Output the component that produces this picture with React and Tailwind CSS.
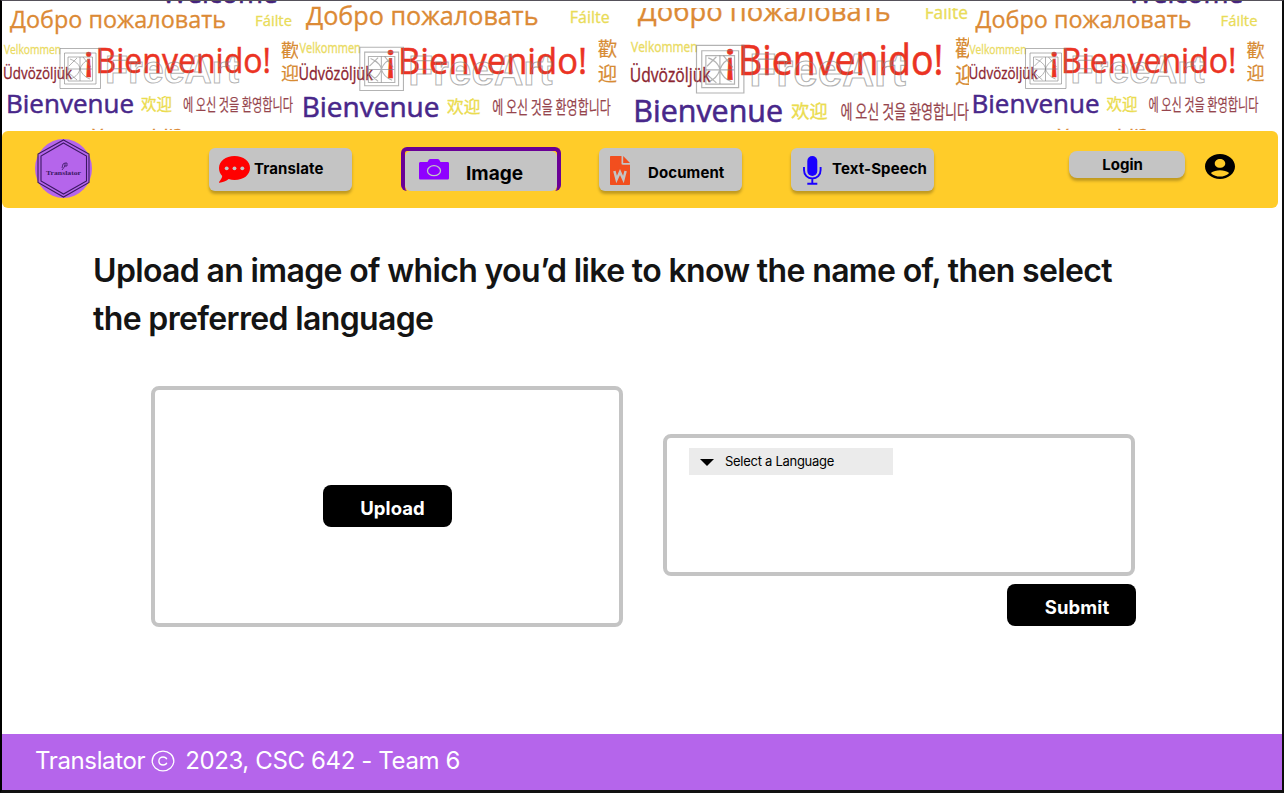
import React from "react";

// One block of greetings, repeated at several sizes across the banner.
function Word({ x, y, w, size, fill, children, cjk, heavy = 0 }) {
  return (
    <text
      x={x}
      y={y}
      textLength={w}
      lengthAdjust="spacingAndGlyphs"
      fontSize={size}
      fill={fill}
      stroke={fill}
      strokeWidth={heavy}
      className={cjk ? "font-['Noto_Sans_CJK_SC',sans-serif]" : "font-['Open_Sans','Noto_Sans',sans-serif]"}
    >
      {children}
    </text>
  );
}

function Greetings({ edge, width, sx, tx, sy, ty, top = 0, bottom = 130 }) {
  return (
    <svg width={width} height="130" viewBox={`${edge} 1 ${width} 130`} className="block shrink-0 overflow-hidden">
      <g transform={`matrix(${sx} 0 0 ${sy} ${tx} ${ty})`}>
        <Word x={162} y={3.3} w={116} size={27} fill="#46247d" heavy={0.6}>Welcome</Word>
        <Word x={10} y={28} w={216} size={23} fill="#dc8a35" heavy={0.3}>Добро пожаловать</Word>
        <Word x={255} y={26} w={37} size={14.5} fill="#e9dc58" heavy={0.3}>Fáilte</Word>
        <Word x={4} y={54} w={57} size={12.5} fill="#eadb62" heavy={0.3}>Velkommen</Word>
        <Word x={3} y={79} w={69} size={16.5} fill="#8c2430" heavy={0.3}>Üdvözöljük</Word>
        <Word x={83.5} y={70.500} w={10.5} size={35} fill="#eb3323" heavy={0.5}>¡</Word>
        <Word x={95.500} y={73} w={175.500} size={34.5} fill="#eb3323" heavy={0.5}>Bienvenido!</Word>
        <Word x={281} y={57} w={18} size={18} fill="#d78b33" cjk heavy={0.2}>歡</Word>
        <Word x={281} y={80} w={18} size={18} fill="#d78b33" cjk heavy={0.2}>迎</Word>
        <Word x={6} y={112.5} w={128} size={25.5} fill="#48278a" heavy={0.5}>Bienvenue</Word>
        <Word x={141} y={109.5} w={31} size={15.5} fill="#ebdc4f" cjk heavy={0.3}>欢迎</Word>
        <Word x={183} y={110.5} w={110} size={16.5} fill="#96454d" cjk heavy={0.2}>에 오신 것을 환영합니다</Word>
        <Word x={92} y={145} w={90} size={21} fill="#dc8a35" heavy={0.3}>Xoş gəldi?</Word>
        <g fill="none" stroke="#808080" strokeOpacity="0.6" strokeWidth="1">
          <path d="M60 48.5h40.500v40H60z M64.500 53h31.500v31H64.500z M68 57h24.500v24H68z" />
          <path d="M80 57v24 M68 69h24 M70 59c8 3 10 8 10 10M70 79c7-2 9-7 10-10M90 59c-6 2-9 7-10 10M90 79c-6-2-9-7-10-10M69 66l8-8M69 73l8 7M83 57l8 10" />
          <text x="105" y="83" textLength="134" lengthAdjust="spacingAndGlyphs" fontSize="39" className="font-['Liberation_Sans',sans-serif] font-bold">FreeArt</text>
        </g>
      </g>
      <path d={`M${edge} 1h${width}V${top}H${edge}z M${edge} ${bottom}h${width}v3h${-width}z`} fill="#fff" />
    </svg>
  );
}

function Logo() {
  return (
    <svg width="57" height="59" viewBox="0 0 57 59" className="ml-[33px] mt-2 shrink-0">
      <ellipse cx="28.500" cy="29.500" rx="28.500" ry="29.500" fill="#b565eb" />
      <g fill="none" stroke="#3b1863" strokeWidth="1.1">
        <path d="M28.500 1 54 15v28.500L28.500 58 3 43.500V15z" />
        <path d="M28.500 4 51.500 17v25L28.500 55 6 42V17z" />
        <path d="m27 29 1-4 2-1v3l-3 4M30 24h2v3h-3" strokeWidth="0.8" />
      </g>
      <text x="11" y="35.500" textLength="35" lengthAdjust="spacingAndGlyphs" fontSize="5.500" fill="#3b1863" className="font-['Liberation_Serif',serif] font-bold">Translator</text>
    </svg>
  );
}

const CommentIcon = () => (
  <svg width="31" height="27" viewBox="0 0 31 27" className="ml-2.5 mt-2 shrink-0">
    <path fill="#f00" d="M15.500 0C24.500 0 31 5 31 12s-6.500 12-15.500 12c-2 0-4-.3-5.800-.9C7 25.300 3.800 26.500.5 26.700c-.6 0-.7-.6-.3-1 1.600-1.800 2.800-3.900 3-5.700C1.200 18 0 15.200 0 12 0 5 6.500 0 15.500 0Z" />
    <g fill="#c4c4c4"><circle cx="7.700" cy="12.300" r="1.900" /><circle cx="15.500" cy="12.300" r="1.900" /><circle cx="23.300" cy="12.300" r="1.900" /></g>
  </svg>
);

const CameraIcon = () => (
  <svg width="30" height="21" viewBox="0 0 30 21" className="ml-[14px] mt-2 shrink-0">
    <path fill="#8f00ff" d="M1.500 3h7l1.300-2.200C10.200.2 10.700 0 11.500 0h7c.8 0 1.400.2 1.700.8L21.500 3h7c1 0 1.500.6 1.500 1.500V19c0 1-.6 1.500-1.500 1.500h-27C.6 20.500 0 20 0 19V4.500C0 3.600.6 3 1.500 3Z" />
    <ellipse cx="15" cy="11.700" rx="6.500" ry="5" fill="none" stroke="#c4c4c4" strokeWidth="1.300" />
  </svg>
);

const WordIcon = () => (
  <svg width="20" height="29" viewBox="0 0 20 29" className="mr-px ml-[11px] mt-2 shrink-0">
    <path fill="#f24e1e" d="M1 0h10.500v7.500c0 .8.500 1.200 1.200 1.200H20V28c0 .6-.5 1-1.200 1H1c-.6 0-1-.4-1-1V1c0-.6.4-1 1-1Z" />
    <path fill="#f24e1e" d="M13.200 0v7H20z" />
    <path d="m4.400 15 2.200 8.500L10 16l3.400 7.500 2.200-8.500" fill="none" stroke="#c4c4c4" strokeWidth="2.500" />
  </svg>
);

const MicIcon = () => (
  <svg width="19" height="29" viewBox="0 0 19 29" className="ml-3 mt-2 shrink-0">
    <rect x="4.300" width="10" height="20" rx="5" fill="#1a00ff" />
    <path d="M1 11v3c0 5 3.500 8.500 8.300 8.500s8.300-3.500 8.300-8.500v-3M9.300 23v4M4.300 27.800h10" fill="none" stroke="#1a00ff" strokeWidth="1.900" />
  </svg>
);

const AccountIcon = () => (
  <svg width="30" height="25" viewBox="2 2 20 20" preserveAspectRatio="none" className="ml-5 mt-[23px] shrink-0">
    <path d="M12 2C6.480 2 2 6.480 2 12s4.480 10 10 10 10-4.480 10-10S17.520 2 12 2zm0 4c1.930 0 3.500 1.570 3.500 3.500S13.930 13 12 13s-3.500-1.570-3.500-3.500S10.070 6 12 6zm0 14c-2.030 0-4.430-.82-6.140-2.880C7.550 15.800 9.680 15 12 15s4.450.8 6.140 2.120C16.430 19.180 14.030 20 12 20z" />
  </svg>
);

function NavButton({ className, children }) {
  return (
    <button className={"mt-[17px] flex h-[43px] w-[143px] shrink-0 items-start rounded-md bg-[#c4c4c4] text-[15px] leading-5 font-bold tracking-[0.1px] shadow-[0_3px_3px_rgba(0,0,0,0.25)] " + className}>
      {children}
    </button>
  );
}

export default function App() {
  return (
    <div className="flex h-[793px] w-[1284px] flex-col overflow-hidden border-t border-r-2 border-b-3 border-l-2 border-t-[#55515a] border-r-[#0c0c0c] border-b-[#111] border-l-black bg-white font-['Inter',sans-serif] text-black">
      <header className="flex h-[130px] shrink-0 overflow-hidden">
        <Greetings edge={2} width={296} sx={1} tx={0} sy={1} ty={0} />
        <Greetings edge={298} width={330} sx={1.077} tx={295.2} sy={1.083} ty={-5.3} />
        <Greetings edge={628} width={341} sx={1.17} tx={626.3} sy={1.19} ty={-12.3} top={8} />
        <Greetings edge={969} width={313} sx={1} tx={965.5} sy={1} ty={0} />
      </header>

      <nav className="flex h-[77px] w-[1276px] shrink-0 items-start rounded-md bg-[#ffcc29]">
        <Logo />
        <NavButton className="ml-[117px]">
          <CommentIcon />
          <span className="mt-[11px] ml-1">Translate</span>
        </NavButton>
        <button className="mt-4 ml-[49px] flex h-11 w-40 shrink-0 items-start rounded-md border-4 border-b-0 border-[#6a0096] text-[19px] leading-6 font-bold">
          <span className="flex h-10 w-[152px] items-start rounded-md bg-[#c4c4c4]">
            <CameraIcon />
            <span className="mt-[11px] ml-[17px]">Image</span>
          </span>
        </button>
        <NavButton className="ml-[38px]">
          <WordIcon />
          <span className="mt-[15px] ml-[17px]">Document</span>
        </NavButton>
        <NavButton className="ml-[49px]">
          <MicIcon />
          <span className="mt-[11px] ml-2.5 whitespace-nowrap">Text-Speech</span>
        </NavButton>
        <button className="mt-5 ml-[135px] flex h-[27px] w-[116px] shrink-0 justify-center rounded-lg bg-[#c4c4c4] pt-1 pr-[9px] text-[15px] leading-5 font-bold shadow-[0_3px_3px_rgba(0,0,0,0.25)]">
          Login
        </button>
        <AccountIcon />
      </nav>

      <main className="flex grow flex-col">
        <h1 className="mt-[39px] ml-[91px] w-[1080px] text-[32px] leading-12 font-semibold tracking-[-0.65px] text-[#141414]">
          Upload an image of which you’d like to know the name of, then select<br />the preferred language
        </h1>
        <div className="mt-[43px] ml-[149px] flex items-start gap-10">
          <section className="flex h-[241px] w-[472px] items-start justify-center rounded-lg border-4 border-[#c4c4c4] pt-[95px]">
            <button className="h-[42px] w-[129px] rounded-lg bg-black pt-1 pl-[11px] text-[18.5px] leading-6 font-bold tracking-[0.1px] text-white">Upload</button>
          </section>
          <section className="mt-12 flex w-[473px] flex-col">
            <div className="h-[142px] w-[472px] rounded-lg border-4 border-[#c4c4c4] pt-2.5 pl-[22px]">
              <div className="flex h-[27px] w-[204px] items-center bg-[#ebebeb] pl-[11px] text-[13px] leading-4 tracking-[-0.28px]">
                <svg width="14" height="7" viewBox="0 0 14 7" className="mt-0.5"><path d="M0 0h14L7 7z" /></svg>
                <span className="-mt-0.5 ml-[11px]">Select a Language</span>
              </div>
            </div>
            <button className="mt-2 h-[42px] w-[129px] self-end rounded-lg bg-black pt-1 pl-[11px] text-[18.5px] leading-6 font-bold tracking-[0.1px] text-white">Submit</button>
          </section>
        </div>
      </main>

      <footer className="flex h-14 shrink-0 items-start bg-[#b565eb] pt-[11px] pl-[33px] text-2xl leading-8 tracking-[-0.37px] text-white">
        <span>Translator</span>
        <svg width="24" height="22" viewBox="0 0 24 22" className="mt-[5px] ml-1.5" fill="none" stroke="#fff" strokeWidth="1.300">
          <ellipse cx="12" cy="11" rx="10.800" ry="9.800" />
          <path d="M15.800 9.200c-.5-1.400-1.900-2.200-3.700-2.200-2.500 0-4.200 1.500-4.200 4s1.700 4 4.200 4c1.800 0 3.200-.8 3.700-2.200" />
        </svg>
        <span className="ml-2.5">2023, CSC 642 - Team 6</span>
      </footer>
    </div>
  );
}
